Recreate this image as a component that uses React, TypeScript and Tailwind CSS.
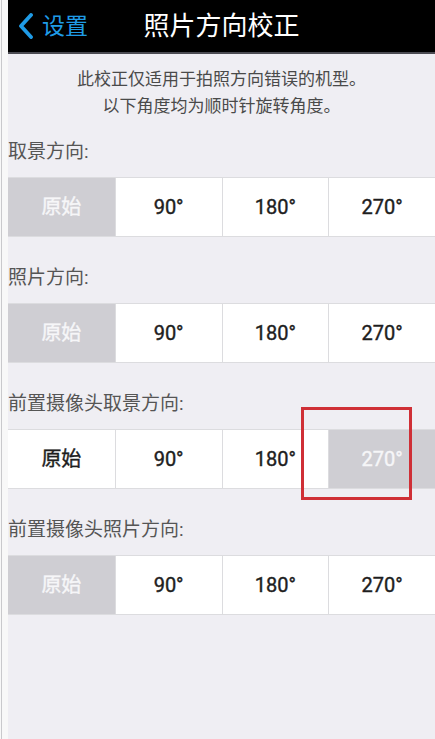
const options = ["原始", "90°", "180°", "270°"];

const sections = [
  { label: "取景方向:", selected: 0 },
  { label: "照片方向:", selected: 0 },
  { label: "前置摄像头取景方向:", selected: 3, marked: true },
  { label: "前置摄像头照片方向:", selected: 0 },
];

function OptionRow({ selected, marked }: { selected: number; marked?: boolean }) {
  return (
    <div className="relative grid h-[60px] grid-cols-4 border-y border-[#dcdcdf]">
      {options.map((opt, i) => (
        <div
          key={opt}
          className={
            (i === selected ? "bg-[#cfced3] text-[#f6f6f8] " : "bg-white text-[#1e1e1e] ") +
            (i > 0 ? "border-l border-[#dcdcdf] " : "") +
            "flex items-center justify-center text-[20px] [-webkit-text-stroke:0.4px_currentColor]"
          }
        >
          {opt}
        </div>
      ))}
      {marked && (
        <div className="absolute left-[293px] top-[-23px] h-[93px] w-[111px] border-[3px] border-[#cf2f36]" />
      )}
    </div>
  );
}

export default function App() {
  return (
    <div
      className="flex h-[739px] w-[435px] overflow-hidden"
      style={{ fontFamily: "Roboto, 'Noto Sans CJK SC', sans-serif" }}
    >
      {/* left edge strip */}
      <div className="flex w-[8px] bg-[#f8f8f8] pl-px">
        <div className="w-px bg-[#c9c9cc]" />
      </div>

      <div className="flex flex-1 flex-col bg-[#efeef3]">
        {/* header */}
        <div className="grid h-[54px] grid-cols-[1fr_auto_1fr] items-center border-b-2 border-[#4b4b52] bg-black">
          <div className="flex items-center text-[#1f9be6]">
            <svg width="16" height="26" viewBox="0 0 16 26" className="ml-[10px] mr-[8px]">
              <polyline
                points="13,2 3,13 13,24"
                fill="none"
                stroke="currentColor"
                strokeWidth="3.8"
                strokeLinecap="round"
                strokeLinejoin="round"
              />
            </svg>
            <span className="text-[23px] leading-none">设置</span>
          </div>
          <div className="text-[26px] leading-none text-white">照片方向校正</div>
          <div />
        </div>

        {/* intro */}
        <div className="pt-[12px] text-center text-[17px] leading-[27px] text-[#4a4a4a]">
          <p>此校正仅适用于拍照方向错误的机型。</p>
          <p>以下角度均为顺时针旋转角度。</p>
        </div>

        {sections.map((s, idx) => (
          <div key={s.label}>
            <div
              className={
                (idx === 0 ? "pt-[19px] " : "pt-[28px] ") +
                "pb-[12px] text-[19px] leading-[26px] text-[#555]"
              }
            >
              {s.label}
            </div>
            <OptionRow selected={s.selected} marked={s.marked} />
          </div>
        ))}
      </div>
    </div>
  );
}
